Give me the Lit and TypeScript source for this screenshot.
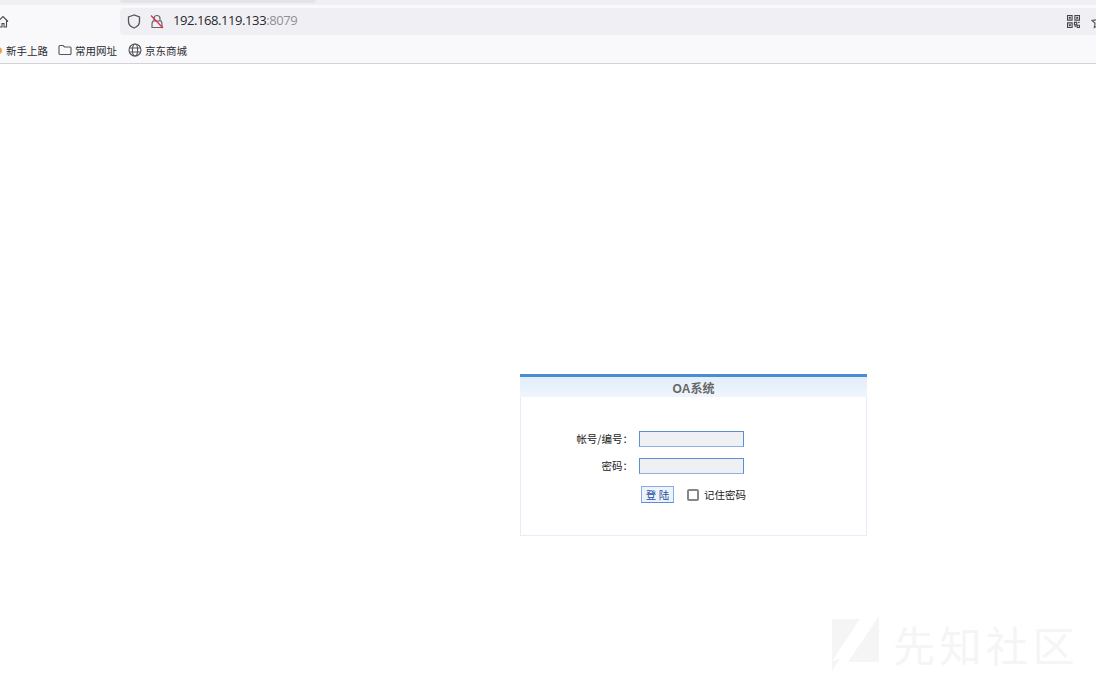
import { LitElement, html, css } from "lit";
import { customElement } from "lit/decorators.js";

@customElement("app-root")
export class AppRoot extends LitElement {
  static styles = css`
    :host { display: block; width: 1096px; height: 678px; position: relative; overflow: hidden; background: #fff;
      font-family: "Noto Sans CJK SC", "Liberation Sans", sans-serif; color: #222; }
    .tabstrip { height: 5px; background: #f0f0f4; padding-left: 120px; }
    .tab { width: 196px; height: 3px; background: #e4e4e6; border-radius: 0 0 4px 4px; }
    .toolbar { height: 30px; background: #f9f9fb; display: flex; align-items: stretch; padding: 3px 0 0 0; box-sizing: border-box; }
    .home { width: 120px; flex: none; display: flex; align-items: center; }
    .home svg { margin-left: -3px; }
    .url { flex: 1; height: 27px; background: #f0f0f4; border-radius: 4px 0 0 4px; display: flex; align-items: center; padding-left: 7px; }
    .shield { margin-right: 9px; }
    .lock { margin-right: 9px; }
    .addr { font: 13px "Open Sans", "Liberation Sans", sans-serif; color: #26262c; letter-spacing: -0.42px; padding-bottom: 3px; }
    .addr span { color: #8f8f96; }
    .url-end { margin-left: auto; display: flex; align-items: center; gap: 11px; margin-right: -9px; }
    .bookmarks { height: 28px; background: #f9f9fb; border-bottom: 1px solid #d4d4d8; box-sizing: content-box;
      display: flex; align-items: center; font-size: 10.5px; color: #2b2b33; padding-top: 0; }
    .bm { display: flex; align-items: center; gap: 3px; margin-right: 11px; position: relative; top: 1px; }
    .bm.first { margin-left: -2px; margin-right: 10px; gap: 4px; }
    .dot { width: 4px; height: 7px; border-radius: 0 4px 4px 0; background: #e8a24a; }
    .page { height: 614px; padding: 310px 0 0 520px; box-sizing: border-box; }
    .panel { width: 347px; height: 162px; box-sizing: border-box; border: 1px solid #e3eefa; border-top: none; }
    .head { margin: 0 -1px; height: 23px; box-sizing: border-box; border-top: 3px solid #4a8bd6;
      background: linear-gradient(#e2eefb, #eff5fc); text-align: center; font: bold 12px/24px "Liberation Sans", "Noto Sans CJK SC", sans-serif; color: #666; overflow: hidden; }
    .form { padding: 34px 0 0 0; display: grid; grid-template-columns: 112px 105px; column-gap: 6px; row-gap: 11px; align-items: center; }
    .label { font-size: 10.5px; line-height: 16px; text-align: right; color: #222; }
    .input { height: 16px; box-sizing: border-box; border: 1px solid #5b8ed6; border-bottom-color: #8fb2e2; background: #eff0f4; }
    .actions { grid-column: 2; display: flex; align-items: center; padding: 1px 0 0 2px; }
    .btn { flex: none; width: 33px; height: 17px; box-sizing: border-box; border: 1px solid #86ace0; border-bottom-color: #5b8ed6; background: #eef3fb;
      font-size: 10.5px; line-height: 15px; text-align: center; color: #1f4fa0; white-space: nowrap; }
    .check { width: 12px; height: 12px; box-sizing: border-box; border: 2px solid #85858b; border-radius: 2px; margin: 0 5px 0 13px; background: #fff; flex: none; }
    .remember { font-size: 10.5px; white-space: nowrap; color: #222; }
    .mark { position: absolute; left: 832px; top: 616px; display: flex; align-items: center; gap: 13px; color: #f5f5f5; font-size: 42px; line-height: 50px; letter-spacing: 4.5px; }
  `;

  render() {
    return html`
      <div class="tabstrip"><div class="tab"></div></div>
      <div class="toolbar">
        <div class="home">
          <svg width="12" height="13" viewBox="0 0 12 13" fill="none" stroke="#4a4a52" stroke-width="1.1">
            <path d="M1 6.5 6 1.5l5 5M2.5 5.5V12h2.500V8.500h2V12h2.500V5.500" />
          </svg>
        </div>
        <div class="url">
          <svg class="shield" width="14" height="15" viewBox="0 0 14 15" fill="none" stroke="#55555c" stroke-width="1.3">
            <path d="M7 1 1.5 3v4.500C1.500 11 4.500 13 7 14c2.500-1 5.500-3 5.500-6.500V3z" />
          </svg>
          <svg class="lock" width="14" height="15" viewBox="0 0 14 15" fill="none" stroke="#66666c" stroke-width="1.2">
            <path d="M4 7V4.500a3 3 0 0 1 6 0V7M3 7h8c.8.8 1 2 1 3.500v3H2v-3C2 9 2.200 7.800 3 7z" />
            <path d="M1 1.500l12 12.500" stroke="#e0294a" />
          </svg>
          <div class="addr">192.168.119.133<span>:8079</span></div>
          <div class="url-end">
            <svg width="13" height="13" viewBox="0 0 14 14" fill="none" stroke="#44444a" stroke-width="1.2">
              <path d="M.5.500h5v5h-5zM8.500.500h5v5h-5zM.5 8.500h5v5h-5zM2.500 2.500h1v1h-1zM10.500 2.500h1v1h-1zM2.500 10.500h1v1h-1zM8 8h2.500v2.500H8zM11 11h2.500v2.500H11zM8 12h2M12 8h1.500" />
            </svg>
            <svg width="14" height="14" viewBox="0 0 14 14" fill="none" stroke="#55555c" stroke-width="1.100">
              <path d="M7 1l1.800 3.900 4.200.5-3.100 2.900.8 4.200L7 10.400 3.300 12.500l.8-4.200L1 5.400l4.200-.5z" />
            </svg>
          </div>
        </div>
      </div>
      <div class="bookmarks">
        <div class="bm first"><span class="dot"></span>新手上路</div>
        <div class="bm">
          <svg width="14" height="12" viewBox="0 0 14 12" fill="none" stroke="#55555c" stroke-width="1.100">
            <path d="M1 2.500a1 1 0 0 1 1-1h3l1.500 1.500H12a1 1 0 0 1 1 1v5.500a1 1 0 0 1-1 1H2a1 1 0 0 1-1-1z" />
          </svg>
          常用网址
        </div>
        <div class="bm">
          <svg width="14" height="14" viewBox="0 0 14 14" fill="none" stroke="#55555c" stroke-width="1.100">
            <circle cx="7" cy="7" r="6" /><ellipse cx="7" cy="7" rx="2.600" ry="6" /><path d="M1 5h12M1 9h12" />
          </svg>
          京东商城
        </div>
      </div>
      <div class="page">
        <div class="panel">
          <div class="head">OA系统</div>
          <div class="form">
            <div class="label">帐号/编号：</div><div class="input"></div>
            <div class="label">密码：</div><div class="input"></div>
            <div class="actions">
              <div class="btn">登 陆</div>
              <span class="check"></span>
              <span class="remember">记住密码</span>
            </div>
          </div>
        </div>
      </div>
      <div class="mark">
        <svg width="48" height="56" viewBox="0 0 48 56" fill="#f5f5f5"><path d="M0 3h28L0 45zM47 0v46H16z" /><path d="M0 45l0 10 8-12z" /></svg>
        <span>先知社区</span>
      </div>
    `;
  }
}
